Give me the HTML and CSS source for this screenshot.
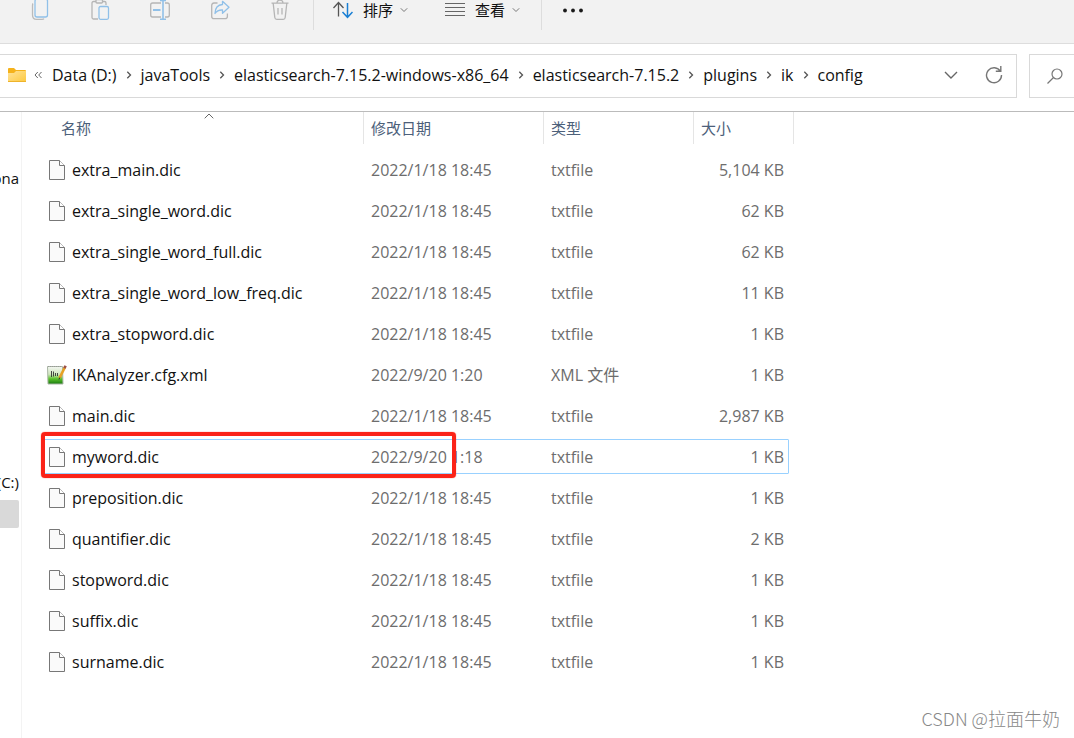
FILE: index.html
```html
<!DOCTYPE html>
<html lang="zh-CN">
<head>
<meta charset="utf-8">
<title>config</title>
<link rel="stylesheet" href="styles.css">
</head>
<body>
<svg class="defs" aria-hidden="true">
  <symbol id="file" viewBox="0 0 20 20"><path d="M2.500.5h10l5 5v14h-15z" fill="#fafafa" stroke="#777"/><path d="M12.500.5v5h5" fill="#fff" stroke="#777"/></symbol>
  <symbol id="down" viewBox="0 0 8 8"><path d="M.8 2.300 4 5.500l3.200-3.200" fill="none" stroke="#777"/></symbol>
  <symbol id="next" viewBox="0 0 8 8"><path d="M2.300.8 5.500 4 2.300 7.200" fill="none" stroke="#555" stroke-width="1.300"/></symbol>
</svg>

<header class="toolbar">
  <button class="tool" aria-label="复制"><svg width="20" height="20" viewBox="0 0 20 20" fill="none" stroke-width="1.300"><path d="M3 3.500Q2.500 4 2.500 6v9q0 4.300 4 4.300H12q1.500 0 2-.7" stroke="#bbb"/><rect x="5" y="-1" width="12.500" height="18" rx="2" stroke="#90c0e8"/></svg></button>
  <button class="tool" aria-label="粘贴"><svg width="20" height="20" viewBox="0 0 20 20" fill="none" stroke-width="1.300"><path d="M6 1.500H3.500q-1.500 0-1.500 1.500v14.500q0 1.500 1.500 1.500H8M12 1.500h2.500q1.500 0 1.500 1.500v2" stroke="#b5b5b5"/><rect x="6" y="-.5" width="6.500" height="3.500" rx="1" stroke="#b5b5b5"/><rect x="9" y="6.500" width="9.500" height="12.800" rx="1.500" stroke="#90c0e8"/></svg></button>
  <button class="tool" aria-label="重命名"><svg width="20" height="20" viewBox="0 0 20 20" fill="none" stroke-width="1.300"><path d="M11 3H2.500Q.7 3 .7 5v10q0 2 1.800 2H11M15 3h2.500q1.800 0 1.800 2v10q0 2-1.800 2H15" stroke="#b5b5b5"/><path d="M10 .5h6M10 19.300h6M13 .5v18.800" stroke="#90c0e8" stroke-width="1.600"/><path d="M3 10h7.500" stroke="#90c0e8" stroke-width="2"/></svg></button>
  <button class="tool" aria-label="共享"><svg width="20" height="20" viewBox="0 0 20 20" fill="none" stroke-width="1.300" stroke-linejoin="round"><path d="M7.500 3H4Q1.700 3 1.700 5.500v10.700q0 2.500 2.300 2.500h11q2.400 0 2.400-2.500V13.500" stroke="#b5b5b5"/><path d="M12.500 1.300 19 7.200l-6.500 6V10q-5-.3-7.500 3.500Q5.200 5 12.500 4.500z" stroke="#90c0e8"/></svg></button>
  <button class="tool" aria-label="删除"><svg width="20" height="20" viewBox="0 0 20 20" fill="none" stroke="#b5b5b5" stroke-width="1.300"><path d="M1.500 3.200h17M7 3q0-2.800 3-2.800T13 3M3.200 3.500l1.600 14q.2 1.800 2 1.800h6.400q1.800 0 2-1.800l1.600-14M8 8v6.500M12 8v6.500"/></svg></button>
  <span class="rule"></span>
  <button class="menu sort"><svg width="20" height="20" viewBox="0 0 20 20" fill="none" stroke-width="1.300"><path d="M5.500 16.500V3M.5 8l5-5.500 5 5.500" stroke="#555"/><path d="M14.500 3v14M9.500 12l5 5.300 5-5.300" stroke="#1a7fd4" stroke-width="1.500"/></svg><span>排序</span><svg class="caret"><use href="#down"/></svg></button>
  <button class="menu view"><svg width="20" height="20" viewBox="0 0 20 20" stroke="#666"><path d="M0 3.500h20M0 7.500h20M0 11.500h20M0 15.500h20"/></svg><span>查看</span><svg class="caret"><use href="#down"/></svg></button>
  <span class="rule"></span>
  <button class="menu more" aria-label="更多"><svg width="20" height="20" viewBox="0 0 20 20" fill="#1a1a1a"><circle cx="2" cy="10.500" r="1.900"/><circle cx="10" cy="10.500" r="1.900"/><circle cx="18" cy="10.500" r="1.900"/></svg></button>
</header>

<div class="address-row">
  <div class="address">
    <svg class="folder" width="18" height="15" viewBox="0 0 18 15"><defs><linearGradient id="g" x2="1" y2="1"><stop stop-color="#ffe39a"/><stop offset="1" stop-color="#fdc93f"/></linearGradient></defs><path d="M0 1q0-1 1-1h5l2 2h9q1 0 1 1v5H0z" fill="#f5b21b"/><path d="M0 5h6l2-2h10v10.500q0 .5-.5.5H.5q-.5 0-.5-.5z" fill="url(#g)"/><path d="M0 13.500h18" stroke="#eeb32b"/></svg>
    <svg class="back" width="8" height="8" viewBox="0 0 8 8" fill="none" stroke="#666"><path d="M3.800 1 1 4l2.800 3M7.500 1 4.700 4l2.800 3"/></svg>
    <nav class="crumbs" aria-label="路径">
      <button>Data (D:)</button><svg><use href="#next"/></svg>
      <button>javaTools</button><svg><use href="#next"/></svg>
      <button>elasticsearch-7.15.2-windows-x86_64</button><svg><use href="#next"/></svg>
      <button>elasticsearch-7.15.2</button><svg><use href="#next"/></svg>
      <button>plugins</button><svg><use href="#next"/></svg>
      <button>ik</button><svg><use href="#next"/></svg>
      <button>config</button>
    </nav>
    <button class="history" aria-label="历史记录"><svg width="14" height="14" viewBox="0 0 14 14" fill="none" stroke="#666" stroke-width="1.400"><path d="m1 4 6 6 6-6"/></svg></button>
    <button class="refresh" aria-label="刷新"><svg width="18" height="18" viewBox="0 0 18 18" fill="none" stroke="#777" stroke-width="1.400"><path d="M15.500 5.500A7.500 7.500 0 1 0 16.500 9M15.800 0v5.200h-5"/></svg></button>
  </div>
  <label class="search"><svg width="16" height="16" viewBox="0 0 16 16" fill="none" stroke="#777" stroke-width="1.200"><circle cx="10" cy="6" r="5"/><path d="M6.500 9.500.5 15.500"/></svg><input type="search" aria-label="搜索"></label>
</div>

<main class="body">
  <aside class="sidebar">
    <span class="place first">ona</span>
    <span class="place drive">(C:)</span>
    <span class="place current"></span>
  </aside>
  <section class="files">
    <table>
      <colgroup><col class="c-name"><col class="c-date"><col class="c-type"><col class="c-size"></colgroup>
      <thead><tr>
        <th class="name"><div>名称<svg class="asc" width="10" height="6" viewBox="0 0 10 6" fill="none" stroke="#666"><path d="m.7 5.300 4.300-4.300 4.300 4.300"/></svg></div></th>
        <th><div>修改日期</div></th><th><div>类型</div></th><th><div>大小</div></th>
      </tr></thead>
      <tbody>
        <tr><td><svg class="icon"><use href="#file"/></svg>extra_main.dic</td><td>2022/1/18 18:45</td><td>txtfile</td><td>5,104 KB</td></tr>
        <tr><td><svg class="icon"><use href="#file"/></svg>extra_single_word.dic</td><td>2022/1/18 18:45</td><td>txtfile</td><td>62 KB</td></tr>
        <tr><td><svg class="icon"><use href="#file"/></svg>extra_single_word_full.dic</td><td>2022/1/18 18:45</td><td>txtfile</td><td>62 KB</td></tr>
        <tr><td><svg class="icon"><use href="#file"/></svg>extra_single_word_low_freq.dic</td><td>2022/1/18 18:45</td><td>txtfile</td><td>11 KB</td></tr>
        <tr><td><svg class="icon"><use href="#file"/></svg>extra_stopword.dic</td><td>2022/1/18 18:45</td><td>txtfile</td><td>1 KB</td></tr>
        <tr><td><svg class="icon" viewBox="0 0 20 20"><defs><linearGradient id="n" x2="0" y2="1"><stop stop-color="#f4f6f2"/><stop offset=".45" stop-color="#cfe6bd"/><stop offset=".7" stop-color="#5cc22c"/><stop offset="1" stop-color="#187a10"/></linearGradient></defs><path d="M.5 1.500h15l.5 17.500H1z" fill="url(#n)" stroke="#a9b5a4"/><path d="M1 1.500h14" stroke="#999" stroke-dasharray="1 1"/><path d="M4.500 6v6M6.500 6.500v5M8.500 8v3M10.500 8v3" stroke="#333" stroke-width=".9"/><path d="M18 2 12.500 13" stroke="#e6a126" stroke-width="2.600"/><path d="m17.400 3.200 1.200-2.500" stroke="#9b5148" stroke-width="2.600"/><path d="m12.800 12.500-.8 2" stroke="#333"/></svg>IKAnalyzer.cfg.xml</td><td>2022/9/20 1:20</td><td>XML 文件</td><td>1 KB</td></tr>
        <tr><td><svg class="icon"><use href="#file"/></svg>main.dic</td><td>2022/1/18 18:45</td><td>txtfile</td><td>2,987 KB</td></tr>
        <tr class="focused"><td><svg class="icon"><use href="#file"/></svg>myword.dic</td><td>2022/9/20 1:18</td><td>txtfile</td><td>1 KB<span class="marker"></span></td></tr>
        <tr><td><svg class="icon"><use href="#file"/></svg>preposition.dic</td><td>2022/1/18 18:45</td><td>txtfile</td><td>1 KB</td></tr>
        <tr><td><svg class="icon"><use href="#file"/></svg>quantifier.dic</td><td>2022/1/18 18:45</td><td>txtfile</td><td>2 KB</td></tr>
        <tr><td><svg class="icon"><use href="#file"/></svg>stopword.dic</td><td>2022/1/18 18:45</td><td>txtfile</td><td>1 KB</td></tr>
        <tr><td><svg class="icon"><use href="#file"/></svg>suffix.dic</td><td>2022/1/18 18:45</td><td>txtfile</td><td>1 KB</td></tr>
        <tr><td><svg class="icon"><use href="#file"/></svg>surname.dic</td><td>2022/1/18 18:45</td><td>txtfile</td><td>1 KB</td></tr>
      </tbody>
    </table>
  </section>
</main>
<div class="watermark">CSDN @拉面牛奶</div>
</body>
</html>
```
FILE: styles.css
```css
* { box-sizing: border-box; }
body {
  margin: 0;
  min-height: 100vh;
  display: flex;
  flex-direction: column;
  position: relative;
  overflow: hidden;
  background: #fff;
  color: #111;
  font: 15px/20px "Open Sans", "Noto Sans CJK SC", sans-serif;
}
svg { display: block; flex: none; }
.defs { position: absolute; width: 0; height: 0; }
button {
  display: flex;
  align-items: center;
  padding: 0;
  border: 0;
  background: none;
  color: inherit;
  font: inherit;
  white-space: nowrap;
}

.toolbar {
  display: flex;
  align-items: flex-start;
  height: 44px;
  padding-left: 30px;
  background: #f2f2f2;
  border-bottom: 1px solid #ddd;
}
.tool { margin-right: 40px; }
.tool:nth-of-type(5) { margin-right: 23px; }
.rule { width: 1px; height: 30px; background: #ddd; }
.menu { height: 20px; }
.menu span { margin: 0 7px 0 10px; }
.sort { margin-left: 19px; }
.view { margin-left: 37px; }
.view + .rule { margin-left: 21px; }
.more { margin-left: 21px; }
.caret { width: 8px; height: 8px; }

.address-row {
  display: flex;
  gap: 12px;
  padding: 10px 0 13px;
  border-bottom: 1px solid #bbb;
}
.address {
  flex: 1;
  min-width: 0;
  height: 44px;
  display: flex;
  align-items: center;
  padding: 0 13px 2px 8px;
  border: 1px solid #d9d9d9;
  border-left: 0;
}
.back { margin: 0 10px 0 8px; }
.crumbs { flex: 1; display: flex; align-items: center; font-size: 16px; }
.crumbs svg { width: 8px; height: 8px; margin: 0 8px; }
.history { margin-right: 27px; }
.search {
  width: 45px;
  display: flex;
  align-items: center;
  padding-left: 17px;
  border: 1px solid #d9d9d9;
  border-right: 0;
}
.search input { width: 0; flex: 1; min-width: 0; padding: 0; border: 0; outline: 0; }

.body { flex: 1; display: flex; }
.sidebar {
  width: 22px;
  padding: 56px 2px 0 0;
  border-right: 1px solid #f3f3f3;
}
.place { display: flex; justify-content: flex-end; height: 20px; }
.drive { margin-top: 284px; }
.current { height: 28px; margin-top: 8px; background: #d9d9d9; border-radius: 0 2px 2px 0; }

.files { flex: 1; padding-left: 20px; }
table { width: 752px; table-layout: fixed; border-collapse: separate; border-spacing: 0; }
.c-name { width: 322px; }
.c-date { width: 180px; }
.c-type { width: 150px; }
.c-size { width: 100px; }
th { height: 37px; padding: 0; vertical-align: top; text-align: left; font-weight: 400; color: #4c607a; }
th div { height: 32px; padding: 6px 0 0 7px; border-right: 1px solid #e5e5e5; }
th.name div { position: relative; padding-left: 19px; }
.asc { position: absolute; left: 162px; top: 1px; }
td { height: 41px; padding: 0 0 0 7px; color: #6d6d6d; font-size: 16px; white-space: nowrap; }
td:first-child { display: flex; align-items: center; gap: 5px; padding-left: 5px; color: #111; }
td:last-child { text-align: right; padding-right: 10px; }
.icon { width: 20px; height: 20px; }
.focused { position: relative; }
.focused::after {
  content: "";
  position: absolute;
  inset: 3px 5px 3px 1px;
  border: 1px solid #99d1ff;
  border-radius: 1px;
}
.marker {
  position: absolute;
  z-index: 1;
  top: -4px;
  bottom: -1px;
  left: -1px;
  width: 415px;
  border: 4px solid #fb2318;
  border-radius: 4px;
  box-shadow: 0 0 1px #fb2318;
}
.watermark {
  position: absolute;
  right: 14px;
  bottom: 10px;
  color: #888;
  font: 300 18px/20px "Noto Sans CJK SC", sans-serif;
}
```
